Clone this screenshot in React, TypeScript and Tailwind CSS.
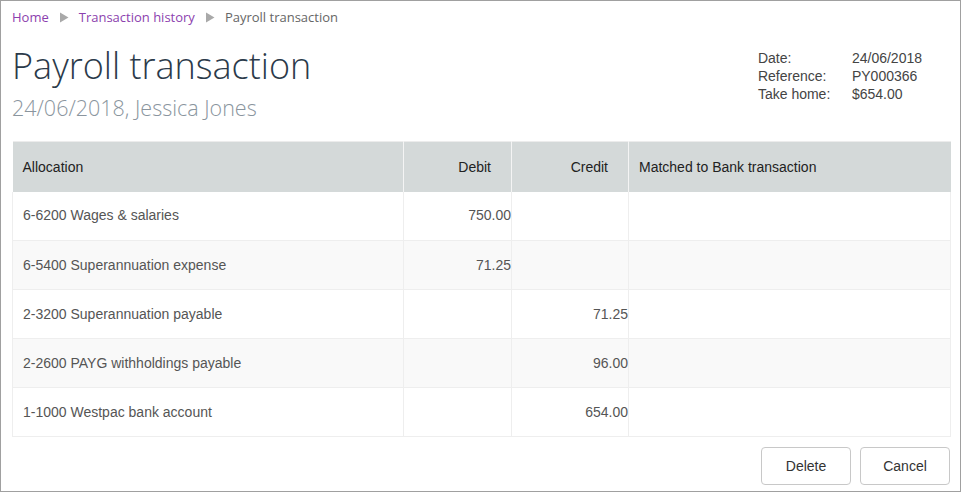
const rows = [
  { account: '6-6200 Wages & salaries', debit: '750.00', credit: '' },
  { account: '6-5400 Superannuation expense', debit: '71.25', credit: '' },
  { account: '2-3200 Superannuation payable', debit: '', credit: '71.25' },
  { account: '2-2600 PAYG withholdings payable', debit: '', credit: '96.00' },
  { account: '1-1000 Westpac bank account', debit: '', credit: '654.00' },
]

const meta = [
  ['Date:', '24/06/2018'],
  ['Reference:', 'PY000366'],
  ['Take home:', '$654.00'],
]

const Arrow = () => (
  <svg width="10" height="11" viewBox="0 0 10 11" className="mx-[10px]">
    <path d="M1 0.5 L9.5 5.5 L1 10.5 Z" fill="#a9a9a9" />
  </svg>
)

export default function App() {
  return (
    <div className="w-[961px] h-[492px] border border-[#a0a0a0] bg-white flex flex-col font-['Liberation_Sans',Arial,sans-serif]">
      {/* Breadcrumb */}
      <nav className="flex items-center h-[32px] pl-[11px] pt-[1px] text-[13px] font-['Open_Sans',sans-serif]">
        <span className="text-[#8c3fae]">Home</span>
        <Arrow />
        <span className="text-[#8c3fae]">Transaction history</span>
        <Arrow />
        <span className="text-[#666]">Payroll transaction</span>
      </nav>

      {/* Header */}
      <div className="flex justify-between pl-[11px] pr-[38px]">
        <div className="font-['Open_Sans',sans-serif]">
          <h1 className="text-[36px] font-light leading-[44px] text-[#2b3a4a] mt-[11px]">Payroll transaction</h1>
          <p className="text-[21.5px] font-light leading-[28px] text-[#8a959e] mt-[6px]">24/06/2018, Jessica Jones</p>
        </div>
        <div className="pt-[16px] text-[14px] leading-[18px] text-[#444]">
          {meta.map(([k, v]) => (
            <div key={k} className="flex">
              <span className="w-[94px]">{k}</span>
              <span>{v}</span>
            </div>
          ))}
        </div>
      </div>

      {/* Table */}
      <div className="pl-[11px] pr-[9px] mt-[19px]">
        <table className="w-[939px] border-collapse text-[14px]">
          <thead>
            <tr className="bg-[#d4d9d9] text-[#222] h-[50px] border-t border-[#ececec]">
              <th className="w-[391px] text-left font-normal pl-[10px] pt-[2px] border-r border-[#f4f4f4]">Allocation</th>
              <th className="w-[108px] text-right font-normal pr-[20px] pt-[2px] border-r border-[#f4f4f4]">Debit</th>
              <th className="w-[117px] text-right font-normal pr-[20px] pt-[2px] border-r border-[#f4f4f4]">Credit</th>
              <th className="text-left font-normal pl-[10px] pt-[2px]">Matched to Bank transaction</th>
            </tr>
          </thead>
          <tbody className="text-[#555]">
            {rows.map((r, i) => (
              <tr key={r.account} className={`h-[49px] border-b border-[#eeeeee] ${i % 2 === 1 ? 'bg-[#f9f9f9]' : 'bg-white'}`}>
                <td className="pl-[10px] border-l border-r border-[#eeeeee]">{r.account}</td>
                <td className="text-right border-r border-[#eeeeee]">{r.debit}</td>
                <td className="text-right border-r border-[#eeeeee]">{r.credit}</td>
                <td className="border-r border-[#eeeeee]"></td>
              </tr>
            ))}
          </tbody>
        </table>
      </div>

      {/* Actions */}
      <div className="flex justify-end gap-[9px] pr-[10px] mt-[10px]">
        <button className="w-[90px] h-[38px] rounded-[4px] border border-[#c8c8c8] bg-white text-[14px] text-[#333]">Delete</button>
        <button className="w-[90px] h-[38px] rounded-[4px] border border-[#c8c8c8] bg-white text-[14px] text-[#333]">Cancel</button>
      </div>
    </div>
  )
}
